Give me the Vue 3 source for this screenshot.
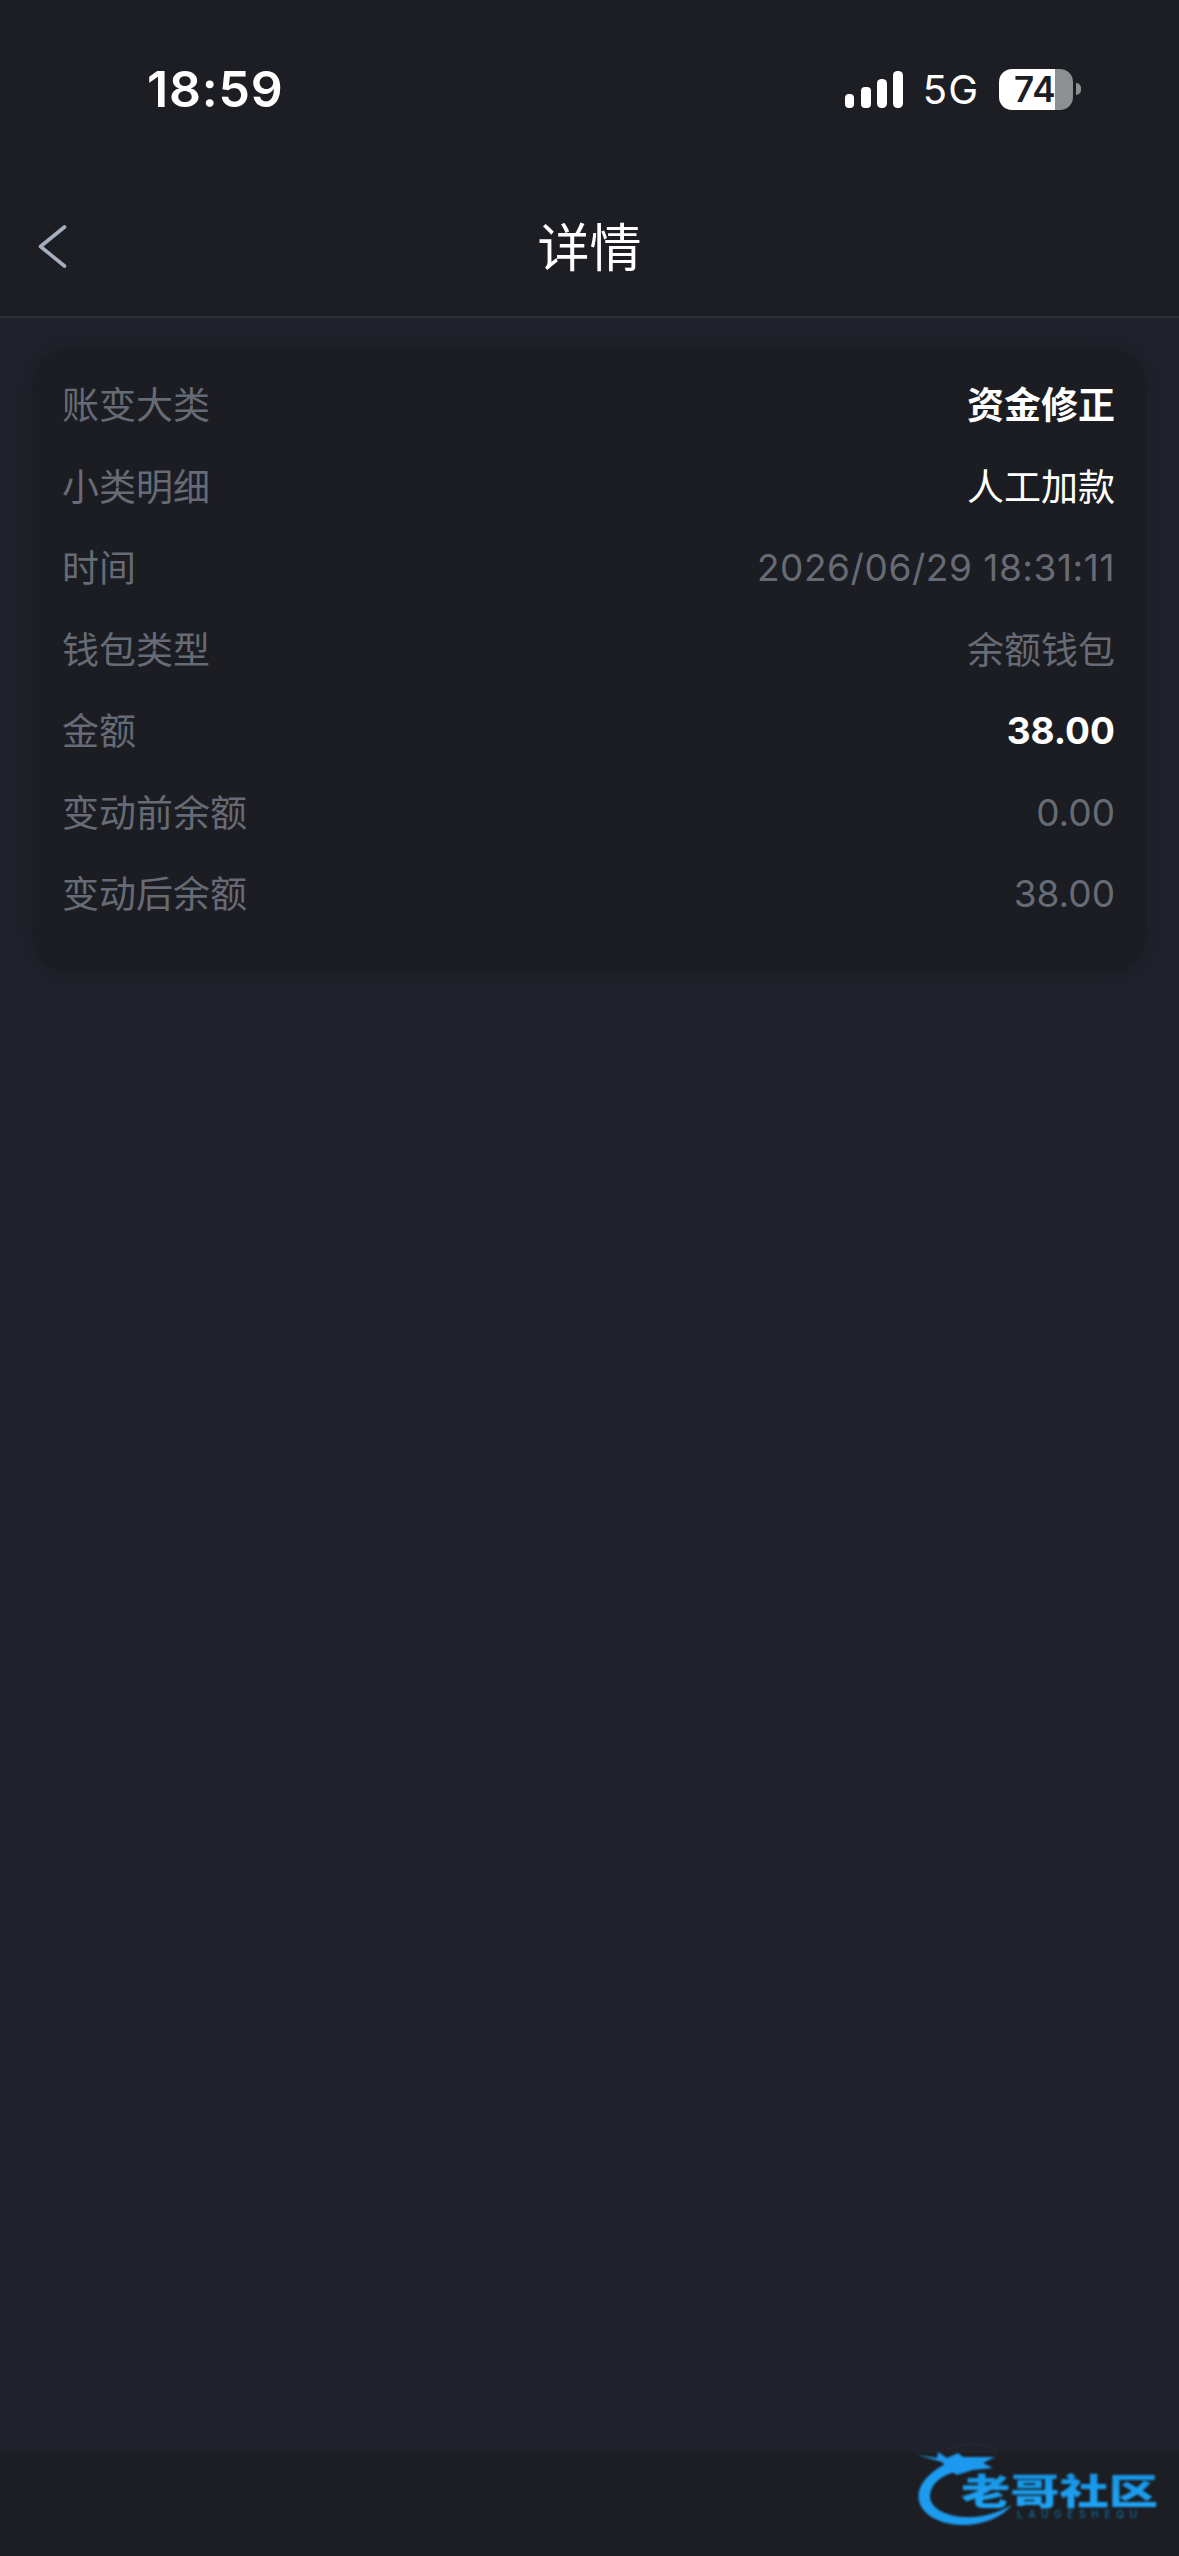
<template>
  <div class="page">
    <header class="top">
      <div class="status">
        <span class="time">18:59</span>
        <div class="status-right">
          <svg class="signal" width="58" height="37" viewBox="0 0 58 37">
            <rect x="0" y="23" width="9" height="14" rx="4" />
            <rect x="16" y="16" width="10" height="21" rx="4" />
            <rect x="32" y="8" width="10" height="29" rx="4.5" />
            <rect x="48" y="0" width="10" height="37" rx="4.5" />
          </svg>
          <span class="net">5G</span>
          <div class="battery"><span>74</span></div>
          <i class="nub"></i>
        </div>
      </div>
      <nav class="nav">
        <svg class="back" width="29" height="43" viewBox="0 0 29 43">
          <path d="M26.5 2 L2.5 21.5 L26.5 41" fill="none" stroke="#a5afbd" stroke-width="3.6" stroke-linecap="round" stroke-linejoin="round" />
        </svg>
        <h1>详情</h1>
      </nav>
    </header>

    <main class="body">
      <section class="card">
        <div v-for="row in rows" :key="row.label" class="row">
          <span class="label">{{ row.label }}</span>
          <span class="value" :class="row.kind">{{ row.value }}</span>
        </div>
      </section>
    </main>

    <footer class="foot"></footer>

    <svg class="mark" width="262" height="112" viewBox="0 0 262 112">
      <defs>
        <linearGradient id="markBlue" x1="0" y1="0" x2="0" y2="1">
          <stop offset="0" stop-color="#1590e0" />
          <stop offset="1" stop-color="#1fa8fa" />
        </linearGradient>
        <filter id="markSoft"><feGaussianBlur stdDeviation="0.8" /></filter>
      </defs>
      <g filter="url(#markSoft)">
        <!-- dragon body and head -->
        <path d="M31 44 C12 54 2 66 2.5 78 C3 95 24 106 47 106 C68 106 86 98 96 86 C82 94 66 99 48 98 C28 97 13 88 14 76 C15 64 26 56 42 52 Z" fill="#1e9cf0" />
        <path d="M1 36 L21 39 L22 33 L31 39 L42 34 L47 38 L79 38 L67 44 L77 49 L57 51 L41 56 L32 51 L26 43 Z" fill="#1c98ee" />
        <path d="M30 30 C46 24 66 24 79 30 L80 37" fill="none" stroke="#2a303a" stroke-width="1" />
        <text class="mark-cn" x="45" y="86" textLength="197" lengthAdjust="spacingAndGlyphs" fill="url(#markBlue)">老哥社区</text>
        <text class="mark-en" x="101" y="99" textLength="120" lengthAdjust="spacing" fill="#17679f">LAUGESHEQU</text>
      </g>
    </svg>
  </div>
</template>

<script setup>
const rows = [
  { label: '账变大类', value: '资金修正', kind: 'strong cjk' },
  { label: '小类明细', value: '人工加款', kind: 'plain cjk' },
  { label: '时间', value: '2026/06/29 18:31:11', kind: 'date' },
  { label: '钱包类型', value: '余额钱包', kind: 'cjk' },
  { label: '金额', value: '38.00', kind: 'strong' },
  { label: '变动前余额', value: '0.00', kind: '' },
  { label: '变动后余额', value: '38.00', kind: '' }
]
</script>

<style>
html, body {
  margin: 0;
  background: #1f222b;
}
</style>

<style scoped>
.page {
  position: relative;
  display: flex;
  flex-direction: column;
  width: 1179px;
  height: 2556px;
  overflow: hidden;
  background: #1f222b;
  color: #fff;
  font-family: Inter, "Noto Sans CJK SC", sans-serif;
}

.top {
  height: 316px;
  background: #1d1e23;
  border-bottom: 2px solid #2c2f38;
}

.status {
  display: flex;
  justify-content: space-between;
  align-items: center;
  height: 178px;
  padding: 0 98px 0 147px;
}
.time {
  font-size: 50px;
  font-weight: 600;
  letter-spacing: 0.8px;
}
.status-right {
  display: flex;
  align-items: center;
}
.signal {
  fill: #fff;
  margin-right: 20px;
}
.net {
  font-size: 40px;
  letter-spacing: 1px;
  margin-right: 20px;
}
.battery {
  width: 74px;
  height: 41px;
  border-radius: 13px;
  background: linear-gradient(90deg, #fff 56px, #8e8f93 56px);
  color: #1d1e23;
  font-size: 35px;
  font-weight: 600;
  line-height: 41px;
  overflow: hidden;
}
.battery span {
  display: block;
  padding-left: 15px;
}
.nub {
  width: 5px;
  height: 12px;
  margin-left: 3px;
  border-radius: 0 6px 6px 0;
  background: #8e8f93;
}

.nav {
  position: relative;
  display: flex;
  justify-content: center;
  align-items: center;
  height: 138px;
}
.nav h1 {
  margin: -6px 0 0;
  font-size: 52px;
  font-weight: 400;
  font-family: "Noto Sans CJK SC", sans-serif;
}
.back {
  position: absolute;
  left: 38px;
  top: 47px;
}

.body {
  flex: 1;
  padding: 31px 33px 0;
}
.card {
  height: 624px;
  box-sizing: border-box;
  padding: 15px 31px 0 29px;
  border-radius: 36px;
  background: #1c1d22;
  box-shadow: 0 0 22px rgba(28, 29, 34, 0.85);
}
.row {
  display: flex;
  justify-content: space-between;
  align-items: center;
  height: 81.5px;
  font-size: 37px;
}
.label {
  margin-top: -3px;
  color: #666b75;
  font-family: "Noto Sans CJK SC", sans-serif;
}
.value {
  color: #666b75;
}
.value.cjk {
  margin-top: -3px;
  font-family: "Noto Sans CJK SC", sans-serif;
}
.value.plain {
  color: #fff;
}
.value.strong {
  color: #fff;
  font-weight: 700;
}
.value.date {
  letter-spacing: 0.55px;
}

.foot {
  height: 103px;
  background: #1d1e23;
}

.mark {
  position: absolute;
  left: 916px;
  bottom: 25px;
}
.mark-cn {
  font-family: "Noto Sans CJK SC", sans-serif;
  font-size: 36px;
  font-weight: 900;
}
.mark-en {
  font-family: Inter, sans-serif;
  font-size: 10px;
  font-weight: 500;
}
</style>
